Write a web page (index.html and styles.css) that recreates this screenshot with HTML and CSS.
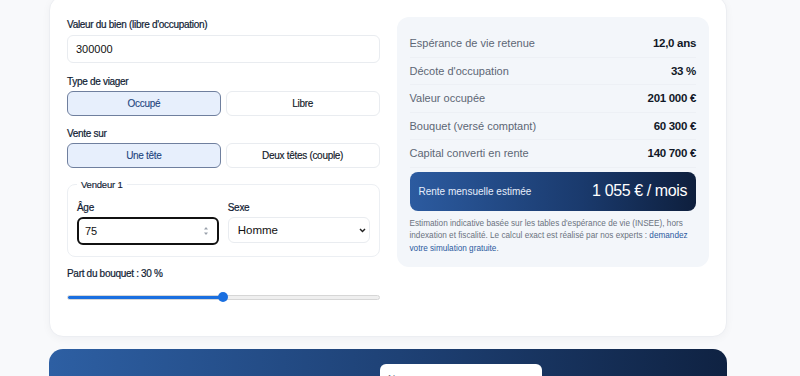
FILE: index.html
```html
<!DOCTYPE html>
<html lang="fr">
<head>
  <meta charset="UTF-8" />
  <meta name="viewport" content="width=device-width, initial-scale=1.0"/>
  <title>Simulateur de viager</title>
  <link rel="stylesheet" href="styles.css">
</head>
<body>
  <div class="page">
    <section class="sim-card">
      <div class="sim-form">
        <label class="field-label">Valeur du bien (libre d'occupation)</label>
        <input class="text-input value-input" type="text" value="300000">

        <div class="field-label">Type de viager</div>
        <div class="toggle">
          <button class="toggle-btn active">Occupé</button>
          <button class="toggle-btn">Libre</button>
        </div>

        <div class="field-label">Vente sur</div>
        <div class="toggle">
          <button class="toggle-btn active">Une tête</button>
          <button class="toggle-btn">Deux têtes (couple)</button>
        </div>

        <fieldset class="seller">
          <legend>Vendeur 1</legend>
          <div class="seller-grid">
            <div class="seller-field">
              <label class="field-label">Âge</label>
              <div class="input-wrap">
                <input class="text-input age-input" type="number" value="75">
                <svg class="spin-icon" width="6" height="12" viewBox="0 0 6 12">
                  <path d="M1 4.5 L3 2 L5 4.5 Z" fill="#9aa1ab"/>
                  <path d="M1 7.5 L3 10 L5 7.5 Z" fill="#9aa1ab"/>
                </svg>
              </div>
            </div>
            <div class="seller-field">
              <label class="field-label">Sexe</label>
              <div class="input-wrap">
                <select class="text-input sex-select">
                  <option>Homme</option>
                  <option>Femme</option>
                </select>
                <svg class="chevron-icon" width="7" height="5" viewBox="0 0 7 5">
                  <path d="M1 1 L3.5 3.6 L6 1" fill="none" stroke="#222" stroke-width="1.4"/>
                </svg>
              </div>
            </div>
          </div>
        </fieldset>

        <div class="field-label bouquet-label">Part du bouquet : 30 %</div>
        <input class="range" type="range" min="10" max="50" value="30">
      </div>

      <aside class="sim-result">
        <div class="result-row"><span>Espérance de vie retenue</span><strong>12,0 ans</strong></div>
        <div class="result-row"><span>Décote d'occupation</span><strong>33 %</strong></div>
        <div class="result-row"><span>Valeur occupée</span><strong>201 000 €</strong></div>
        <div class="result-row"><span>Bouquet (versé comptant)</span><strong>60 300 €</strong></div>
        <div class="result-row"><span>Capital converti en rente</span><strong>140 700 €</strong></div>

        <div class="rente-box">
          <span>Rente mensuelle estimée</span>
          <strong>1 055 € / mois</strong>
        </div>

        <p class="note">
          Estimation indicative basée sur les tables d'espérance de vie (INSEE), hors
          indexation et fiscalité. Le calcul exact est réalisé par nos experts :
          <a href="#">demandez votre simulation gratuite</a>.
        </p>
      </aside>
    </section>

    <section class="cta">
      <div class="cta-intro"></div>
      <div class="cta-form">
        <div class="cta-field">Nom</div>
      </div>
    </section>
  </div>
</body>
</html>
```

FILE: styles.css
```css
* {
  box-sizing: border-box;
}

body {
  margin: 0;
  background: #f8f9fb;
  font-family: "Liberation Sans", Arial, sans-serif;
  color: #111827;
}

.page {
  width: 678px;
  margin-left: 49px;
}

.sim-card {
  margin-top: -4px;
  background: #fff;
  border: 1px solid #eceef2;
  border-radius: 14px;
  box-shadow: 0 2px 8px rgba(20, 30, 50, 0.04);
  padding: 21px 17px 33px;
  display: grid;
  grid-template-columns: 1fr 1fr;
  gap: 17px;
  align-items: start;
}

/* form column */
.sim-form {
  display: flex;
  flex-direction: column;
}

.field-label {
  display: block;
  font-size: 10px;
  line-height: 14px;
  letter-spacing: -0.3px;
  color: #0f1b33;
  -webkit-text-stroke: 0.2px #0f1b33;
}

.text-input {
  font-family: "Liberation Sans", Arial, sans-serif;
  font-size: 11px;
  color: #111;
  background: #fff;
  border: 1px solid #e9ecf0;
  border-radius: 6px;
  outline: none;
}

.value-input {
  height: 28px;
  margin-top: 3px;
  margin-bottom: 12px;
  padding: 0 8px;
}

.toggle {
  display: grid;
  grid-template-columns: 1fr 1fr;
  gap: 5px;
  margin-top: 2px;
  margin-bottom: 11px;
}

.toggle-btn {
  height: 25px;
  font-family: "Liberation Sans", Arial, sans-serif;
  font-size: 10px;
  letter-spacing: -0.3px;
  color: #111827;
  -webkit-text-stroke: 0.15px #111827;
  background: #fff;
  border: 1px solid #e9ecf0;
  border-radius: 6px;
  cursor: pointer;
}

.toggle-btn.active {
  background: #e7effc;
  border-color: #6f7f9e;
  color: #23457e;
  -webkit-text-stroke: 0.1px #23457e;
}

.seller {
  margin: 0;
  padding: 11px 9px 11px;
  border: 1px solid #eceff3;
  border-radius: 8px;
}

.seller legend {
  padding: 0 4px;
  font-size: 9.5px;
  letter-spacing: -0.2px;
  color: #0f1b33;
  -webkit-text-stroke: 0.15px #0f1b33;
}

.seller-grid {
  display: grid;
  grid-template-columns: 1fr 1fr;
  gap: 9px;
}

.seller-field .field-label {
  margin-bottom: 2px;
}

.input-wrap {
  position: relative;
}

.age-input {
  width: 100%;
  height: 28px;
  padding: 0 6px;
  border: 2px solid #111;
  -moz-appearance: textfield;
}

.age-input::-webkit-inner-spin-button,
.age-input::-webkit-outer-spin-button {
  -webkit-appearance: none;
  margin: 0;
}

.spin-icon {
  position: absolute;
  right: 10px;
  top: 8px;
}

.sex-select {
  -webkit-appearance: none;
  appearance: none;
  width: 100%;
  height: 26px;
  padding: 0 20px 0 9px;
  font-size: 11.5px;
}

.chevron-icon {
  position: absolute;
  right: 4px;
  top: 11px;
  pointer-events: none;
}

.bouquet-label {
  margin-top: 10px;
}

.range {
  -webkit-appearance: none;
  appearance: none;
  width: 100%;
  height: 12px;
  margin: 10px 0 0;
  background: transparent;
}

.range::-webkit-slider-runnable-track {
  height: 5px;
  border-radius: 3px;
  border: 1px solid #d6d6d6;
  background: linear-gradient(90deg, #1a6fe0 50%, #efefef 50%);
}

.range::-webkit-slider-thumb {
  -webkit-appearance: none;
  width: 10px;
  height: 10px;
  margin-top: -3.5px;
  border-radius: 50%;
  background: #1a6fe0;
  border: none;
}

/* result column */
.sim-result {
  background: #f3f6fa;
  border-radius: 12px;
  padding: 13px 13px 12px;
  margin-top: -1px;
}

.result-row {
  display: flex;
  justify-content: space-between;
  align-items: center;
  height: 27.5px;
  border-bottom: 1px solid #edf0f5;
  font-size: 11px;
}

.result-row:last-of-type {
  border-bottom: none;
}

.result-row span {
  color: #5d6675;
}

.result-row strong {
  font-size: 11.5px;
  letter-spacing: -0.3px;
  color: #111827;
}

.rente-box {
  margin-top: 4px;
  height: 39px;
  padding: 0 9px;
  display: flex;
  justify-content: space-between;
  align-items: center;
  border-radius: 8px;
  background: linear-gradient(90deg, #2c5ba0, #1a3a6d 60%, #0e1f3d);
  color: #fff;
}

.rente-box span {
  font-size: 10px;
  color: #e6eefb;
}

.rente-box strong {
  font-size: 16px;
  font-weight: normal;
  letter-spacing: -0.4px;
}

.note {
  margin: 7px 0 0;
  font-size: 8.2px;
  line-height: 12.5px;
  color: #6b7280;
}

.note a {
  color: #2c5aa0;
  text-decoration: none;
}

/* call to action */
.cta {
  margin-top: 12px;
  height: 60px;
  border-radius: 14px 14px 0 0;
  background: linear-gradient(90deg, #2d5fa3, #1d3f72 55%, #0f2242);
  padding: 15px 0 0 0;
  display: grid;
  grid-template-columns: 313px 162px;
  gap: 18px;
}

.cta-form {
  background: #fff;
  border-radius: 6px 6px 0 0;
  padding: 10px 8px 0;
}

.cta-field {
  font-size: 10px;
  color: #6b7280;
}
```
